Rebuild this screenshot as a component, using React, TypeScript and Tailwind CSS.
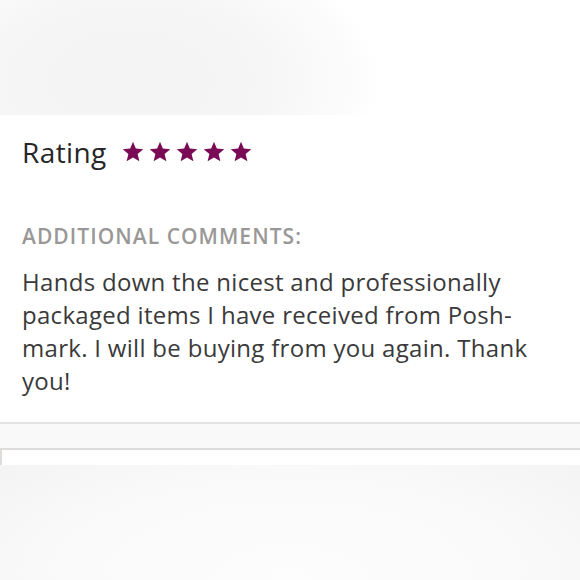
import React from "react";

function Star() {
  return (
    <svg width="22" height="22" viewBox="0 0 24 23" className="block">
      <path
        d="M12 0.3l3.1 7.5 8.1 0.65-6.15 5.3 1.9 7.9L12 17.5l-6.95 4.15 1.9-7.9L0.8 8.45l8.1-0.65z"
        fill="#7a0a55"
      />
    </svg>
  );
}

export default function App() {
  return (
    <div className="w-[580px] h-[580px] overflow-hidden bg-white font-['Open_Sans',sans-serif]">
      <div className="h-[115px] bg-[radial-gradient(ellipse_250px_150px_at_130px_80px,#f4f3f4_0%,#f7f6f7_55%,#fcfbfc_85%,#ffffff_100%)]" />
      <div className="h-[307px] px-[22px] pt-[23px] flex flex-col">
        <div className="flex items-center h-[28px]">
          <span className="text-[28px] leading-[28px] tracking-[0.4px] text-[#262626]">Rating</span>
          <div className="ml-[15px] flex gap-[5px]">
            <Star />
            <Star />
            <Star />
            <Star />
            <Star />
          </div>
        </div>
        <div className="mt-[60px] text-[21px] leading-[21px] font-semibold tracking-[1.05px] text-[#9a9896]">
          ADDITIONAL COMMENTS:
        </div>
        <div className="mt-[18px] text-[24px] leading-[33px] tracking-[0.3px] text-[#3a3a3a]">
          <div>Hands down the nicest and professionally</div>
          <div>packaged items I have received from Posh-</div>
          <div>mark. I will be buying from you again. Thank</div>
          <div>you!</div>
        </div>
      </div>
      <div className="h-[2px] bg-[#e3e2e1]" />
      <div className="h-[24px] bg-[#faf9f9]" />
      <div className="h-[2px] bg-[#dddcda]" />
      <div className="h-[15px] bg-white border-l-2 border-[#dddcda]" />
      <div className="h-[115px] bg-[radial-gradient(ellipse_420px_170px_at_290px_110px,#fdfdfd_0%,#f9f9f9_60%,#f3f3f3_100%)]" />
    </div>
  );
}
